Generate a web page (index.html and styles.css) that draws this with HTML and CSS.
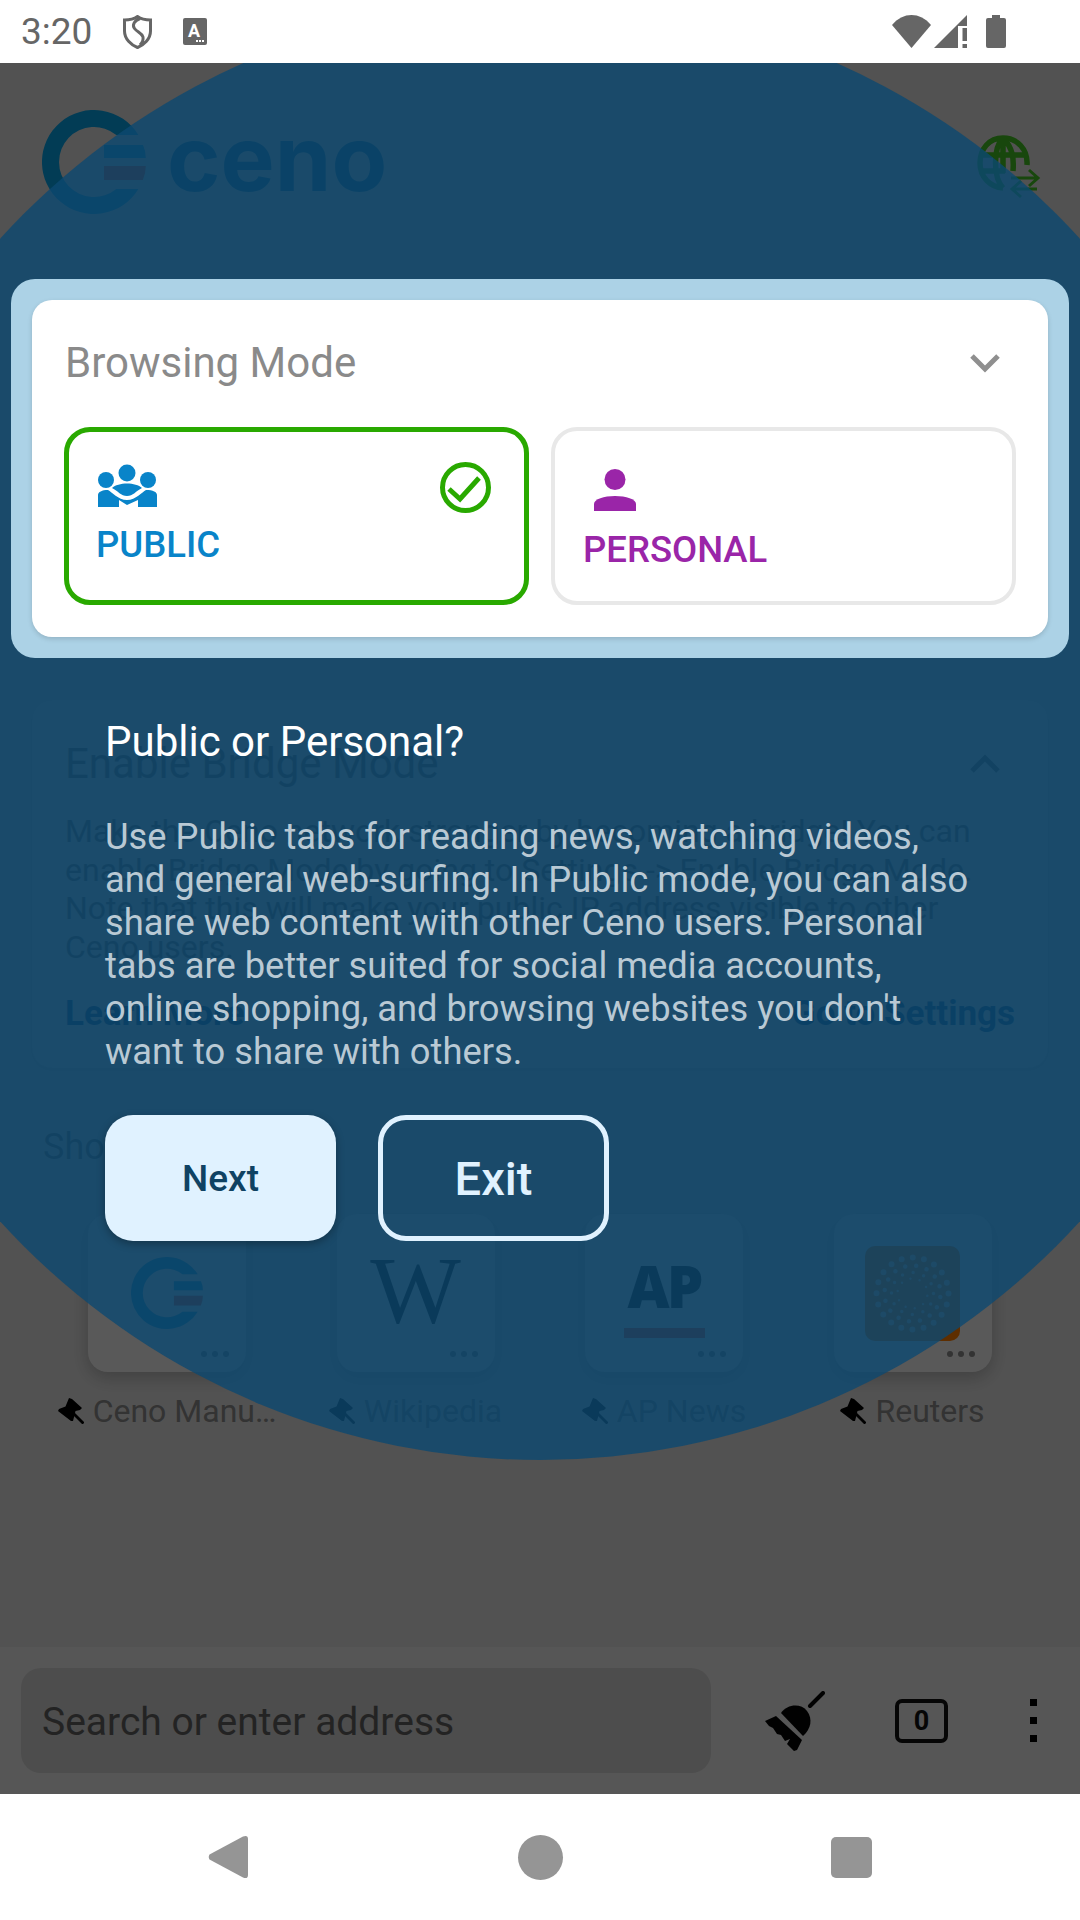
FILE: index.html
```html
<!DOCTYPE html>
<html lang="en">
<head>
    <meta charset="UTF-8">
    <meta name="viewport" content="width=device-width, initial-scale=1.0">
    <title>Ceno Browser</title>
    <link rel="stylesheet" href="styles.css">
</head>
<body>
    <svg class="defs" width="0" height="0">
        <symbol id="ceno-mark" viewBox="0 0 104 104">
            <path fill="#08a2e6" d="M96.4 25A52 52 0 1 0 96.4 79H74.3A35 35 0 1 1 74.3 25Z"/>
            <path fill="#08a2e6" d="M62 35H101Q103.8 41 103.8 48H62Z"/>
            <path fill="#ff4a2a" d="M62 56H103.8Q103.8 63 100.8 70H62Z"/>
        </symbol>
        <symbol id="pin" viewBox="0 0 26 26">
            <path d="M11 0L14 1L24 10L22 12L17.500 13L15 23L13 23L0 13L1 11L7.500 8.500Z"/>
            <path d="M14 14L25.500 25.500" fill="none" stroke="#000" stroke-width="2.800"/>
        </symbol>
    </svg>

    <div class="phone">
        <header class="status-bar">
            <span class="clock">3:20</span>
            <svg class="status-shield" width="29" height="34" viewBox="0 0 29 34" fill="none" stroke="#666" stroke-width="3">
                <path d="M14.500 1.500C18 4 23 5 27.500 5V16C27.500 24 21 30 14.500 32.500C8 30 1.500 24 1.500 16V5C6 5 11 4 14.500 1.500Z"/>
                <path d="M17 3.500C11 6 9 10 11.500 13.500C14 17 19 18 20 22C20.500 25 19 28 17 30"/>
            </svg>
            <svg class="status-note" width="24" height="27" viewBox="0 0 24 27">
                <rect width="24" height="27" rx="2" fill="#666"/>
                <text x="11" y="18.500" class="status-note-a">A</text>
                <rect x="13" y="22" width="2" height="2" fill="#fff"/>
                <rect x="16" y="22" width="2" height="2" fill="#fff"/>
                <rect x="19" y="22" width="2" height="2" fill="#fff"/>
            </svg>
            <div class="status-right">
                <svg width="39" height="33" viewBox="0 0 39 33" fill="#666"><path d="M0 10C11-3.300 28-3.300 39 10L19.500 33Z"/></svg>
                <svg width="33" height="33" viewBox="0 0 33 33" fill="#666"><path d="M33 0V11H24V33H0Z"/><rect x="28.500" y="13" width="4.500" height="13"/><rect x="28.500" y="29" width="4.500" height="4"/></svg>
                <svg class="status-battery" width="20" height="33" viewBox="0 0 20 33" fill="#666"><path d="M6 0H14V3H18Q20 3 20 5V31Q20 33 18 33H2Q0 33 0 31V5Q0 3 2 3H6Z"/></svg>
            </div>
        </header>

        <main class="screen">
            <!-- home page, dimmed by the scrim -->
            <div class="home">
                <div class="home-header">
                    <svg class="logo-mark" width="104" height="104"><use href="#ceno-mark"/></svg>
                    <span class="logo-word">ceno</span>
                    <svg class="globe" width="66" height="70" viewBox="0 0 66 70" fill="none" stroke="#42c024" stroke-width="5.500">
                        <path d="M50 30C51 14 40 3 26 3C12 3 3 14 3 28C3 42 13 52 26 53"/>
                        <path d="M26 3C16 13 16 42 26 53M26 3C36 13 37 24 36 36M4 20H48M4 36H28M26 3V38"/>
                        <path d="M34 43H60M52 35L61 43L52 51M60 54H36M44 46L35 54L44 62" stroke-width="3"/>
                    </svg>
                </div>
                <div class="mode-slot"></div>

                <section class="bridge-card">
                    <div class="bridge-head">
                        <span>Enable Bridge Mode</span>
                        <svg width="32" height="20" viewBox="0 0 32 20" fill="none" stroke="#777" stroke-width="5"><path d="M3 17L16 4L29 17"/></svg>
                    </div>
                    <p class="bridge-text">Make the Ceno network stronger by becoming a bridge! You can<br>enable Bridge Mode by going to Settings -&gt; Enable Bridge Mode.<br>Note that this will make your public IP address visible to other<br>Ceno users.</p>
                    <div class="bridge-actions">
                        <span>Learn More</span>
                        <span>Go to Settings</span>
                    </div>
                </section>

                <h3 class="shortcuts-title">Shortcuts</h3>
                <div class="shortcuts">
                    <div class="shortcut">
                        <div class="tile">
                            <svg width="72" height="72"><use href="#ceno-mark"/></svg>
                            <i class="tile-dots"></i>
                        </div>
                        <div class="tile-label"><svg width="26" height="26"><use href="#pin"/></svg>Ceno Manu…</div>
                    </div>
                    <div class="shortcut">
                        <div class="tile">
                            <span class="tile-w">W</span>
                            <i class="tile-dots"></i>
                        </div>
                        <div class="tile-label"><svg width="26" height="26"><use href="#pin"/></svg>Wikipedia</div>
                    </div>
                    <div class="shortcut">
                        <div class="tile tile-ap">
                            <span class="tile-ap-word">AP</span>
                            <b class="tile-ap-bar"></b>
                            <i class="tile-dots"></i>
                        </div>
                        <div class="tile-label"><svg width="26" height="26"><use href="#pin"/></svg>AP News</div>
                    </div>
                    <div class="shortcut">
                        <div class="tile">
                            <svg class="reuters" width="95" height="95" viewBox="0 0 95 95" fill="none" stroke="#fff" stroke-linecap="round" stroke-opacity="0.7">
                                <circle cx="47.500" cy="47.500" r="36" stroke-width="6" stroke-dasharray="0 11.310"/>
                                <circle cx="47.500" cy="47.500" r="28" stroke-width="4.500" stroke-dasharray="0 11" transform="rotate(7 47.500 47.500)"/>
                                <circle cx="47.500" cy="47.500" r="21" stroke-width="3.500" stroke-dasharray="0 11"/>
                                <circle cx="47.500" cy="47.500" r="15" stroke-width="2.500" stroke-dasharray="0 9.400" transform="rotate(9 47.500 47.500)"/>
                            </svg>
                            <i class="tile-dots"></i>
                        </div>
                        <div class="tile-label"><svg width="26" height="26"><use href="#pin"/></svg>Reuters</div>
                    </div>
                </div>

                <div class="toolbar">
                    <div class="search-box">Search or enter address</div>
                    <svg class="broom" width="60" height="60" viewBox="0 0 60 60">
                        <path d="M58 2L45 15" fill="none" stroke="#050505" stroke-width="4" stroke-linecap="round"/>
                        <path d="M16 22C22 13 36 12 42 20C48 28 46 38 38 45Z" fill="#050505"/>
                        <path d="M0 30L11 25L37 49L32 59L29 60L22 53L25 48L20 50L16 44L12 43L8 37L4 35Z" fill="#050505"/>
                    </svg>
                    <div class="tab-count">0</div>
                    <div class="menu-dots"><i></i><i></i><i></i></div>
                </div>
            </div>

            <div class="scrim"></div>
            <div class="spotlight"></div>

            <!-- onboarding step on top of the spotlight -->
            <div class="tour">
                <div class="mode-halo">
                    <div class="mode-card">
                        <div class="mode-head">
                            <span>Browsing Mode</span>
                            <svg width="32" height="20" viewBox="0 0 32 20" fill="none" stroke="#8f8f8f" stroke-width="5"><path d="M3 3L16 16L29 3"/></svg>
                        </div>
                        <div class="mode-options">
                            <div class="mode-option mode-public">
                                <svg width="59" height="43" viewBox="0 0 59 43" fill="#0984c9">
                                    <circle cx="29" cy="9" r="8.500"/>
                                    <circle cx="8" cy="16" r="8"/>
                                    <circle cx="50" cy="16" r="8"/>
                                    <path d="M14 24C20 18 38 18 44 24C38 27 35 32 29 32C23 32 20 27 14 24Z"/>
                                    <path d="M0 43V31C0 28 4 26 10 26C14 28 20 36 29 36C38 36 44 28 48 26C55 26 59 28 59 31V43H40V36L29 41L21 36V43Z"/>
                                </svg>
                                <span>PUBLIC</span>
                                <svg class="mode-check" width="51" height="51" viewBox="0 0 51 51" fill="none" stroke="#29a900" stroke-width="5">
                                    <circle cx="25.500" cy="25.500" r="23"/>
                                    <path d="M9 27L20 37L39 16"/>
                                </svg>
                            </div>
                            <div class="mode-option mode-personal">
                                <svg width="42" height="42" viewBox="0 0 42 42" fill="#9a25a8">
                                    <ellipse cx="21" cy="10.500" rx="10.500" ry="10.500"/>
                                    <path d="M0 42V35C0 30 10 27 21 27C32 27 42 30 42 35V42Z"/>
                                </svg>
                                <span>PERSONAL</span>
                            </div>
                        </div>
                    </div>
                </div>

                <div class="tour-copy">
                    <h2>Public or Personal?</h2>
                    <p>Use Public tabs for reading news, watching videos,<br>and general web-surfing. In Public mode, you can also<br>share web content with other Ceno users. Personal<br>tabs are better suited for social media accounts,<br>online shopping, and browsing websites you don't<br>want to share with others.</p>
                    <div class="tour-buttons">
                        <button class="btn-next">Next</button>
                        <button class="btn-exit">Exit</button>
                    </div>
                </div>
            </div>
        </main>

        <footer class="nav-bar">
            <svg width="40" height="44" viewBox="0 0 40 44" fill="#959595"><path d="M35 1.500L1.500 19.500Q0 22 1.500 24.500L35 42.500Q40 44.500 40 40V4Q40-.5 35 1.500Z"/></svg>
            <div class="nav-home"></div>
            <div class="nav-recent"></div>
        </footer>
    </div>
</body>
</html>
```

FILE: styles.css
```css
* {
    box-sizing: border-box;
}
body {
    margin: 0;
    font-family: Roboto, "Noto Sans", sans-serif;
    background-color: #fff;
}
.defs {
    position: absolute;
}
.phone {
    width: 1080px;
    height: 1920px;
    display: flex;
    flex-direction: column;
    overflow: hidden;
}

/* status bar */
.status-bar {
    height: 63px;
    flex: none;
    display: flex;
    align-items: center;
    padding: 0 74px 0 21px;
    background-color: #fff;
    position: relative;
    z-index: 5;
}
.clock {
    width: 72px;
    font-size: 37px;
    color: #666;
}
.status-shield {
    margin-left: 30px;
}
.status-note {
    margin-left: 31px;
}
.status-note-a {
    font-size: 18px;
    font-weight: 700;
    fill: #fff;
    text-anchor: middle;
}
.status-right {
    margin-left: auto;
    display: flex;
    gap: 3px;
}
.status-battery {
    margin-left: 16px;
}

/* page behind the overlay */
.screen {
    height: 1731px;
    flex: none;
    position: relative;
    overflow: hidden;
}
.home {
    height: 100%;
    display: flex;
    flex-direction: column;
    background-color: #dfdfdf;
}
.home-header {
    height: 237px;
    flex: none;
    display: flex;
    align-items: flex-start;
    padding: 47px 37px 0 42px;
}
.logo-word {
    margin: 22px 0 0 21px;
    font-family: Inter, sans-serif;
    font-size: 91px;
    font-weight: 700;
    line-height: 52px;
    color: #0a78b0;
}
.globe {
    margin: 25px 0 0 auto;
}
.mode-slot {
    height: 337px;
    flex: none;
}
.bridge-card {
    margin: 63px 32px 0;
    height: 368px;
    flex: none;
    padding: 39px 33px 0;
    border-radius: 20px;
    background-color: #e3e3e3;
    box-shadow: 0 2px 6px rgba(0,0,0,0.12);
}
.bridge-head {
    display: flex;
    justify-content: space-between;
    align-items: center;
    padding-right: 14px;
    font-size: 42px;
    line-height: 50px;
    color: #777;
}
.bridge-text {
    margin: 23px 0 0;
    font-size: 32px;
    line-height: 38.5px;
    color: #777;
}
.bridge-actions {
    margin-top: 26px;
    display: flex;
    justify-content: space-between;
    font-size: 35px;
    font-weight: 700;
    line-height: 44px;
    color: #05589a;
}
.shortcuts-title {
    margin: 57px 0 0 43px;
    font-size: 36px;
    font-weight: 400;
    line-height: 44px;
    color: #777;
}
.shortcuts {
    margin-top: 45px;
    padding-left: 88px;
    display: grid;
    grid-template-columns: repeat(4, 158px);
    column-gap: 90.5px;
}
.shortcut {
    display: flex;
    flex-direction: column;
    align-items: center;
}
.tile {
    width: 158px;
    height: 158px;
    position: relative;
    display: flex;
    align-items: center;
    justify-content: center;
    border-radius: 20px;
    background-color: #f2f2f2;
    box-shadow: 0 6px 18px rgba(0,0,0,0.22);
}
.tile-dots {
    position: absolute;
    right: 17px;
    bottom: 15px;
    width: 6px;
    height: 6px;
    border-radius: 50%;
    background-color: #8a8a8a;
    box-shadow: -11px 0 0 #8a8a8a, -22px 0 0 #8a8a8a;
}
.tile-w {
    margin-top: -4px;
    font-family: "Liberation Serif", serif;
    font-size: 96px;
    line-height: 96px;
    color: #000;
}
.tile-ap {
    flex-direction: column;
    padding-top: 14px;
}
.tile-ap-word {
    font-family: "Open Sans", sans-serif;
    font-size: 58px;
    font-weight: 800;
    line-height: 46px;
    letter-spacing: -3px;
    color: #000;
}
.tile-ap-bar {
    width: 81px;
    height: 10px;
    margin-top: 19px;
    background-color: #ff4a2a;
}
.reuters {
    border-radius: 10px;
    background-color: #ff7d00;
}
.tile-label {
    margin-top: 19px;
    display: flex;
    align-items: center;
    gap: 9px;
    white-space: nowrap;
    font-size: 32px;
    line-height: 40px;
    color: #8a8a8a;
}

/* bottom toolbar */
.toolbar {
    height: 147px;
    flex: none;
    margin-top: auto;
    display: flex;
    align-items: center;
    padding-left: 21px;
    background-color: #e8e8e8;
}
.search-box {
    width: 690px;
    height: 105px;
    display: flex;
    align-items: center;
    padding: 3px 0 0 21px;
    border-radius: 20px;
    background-color: #d0d0d0;
    font-size: 39px;
    color: #616161;
}
.broom {
    margin-left: 54px;
}
.tab-count {
    width: 53px;
    height: 44px;
    margin-left: 70px;
    display: flex;
    align-items: center;
    justify-content: center;
    border: 4px solid #000;
    border-radius: 7px;
    font-size: 27px;
    font-weight: 700;
    color: #000;
    opacity: 0.92;
}
.menu-dots {
    margin-left: 82px;
    display: flex;
    flex-direction: column;
    gap: 11px;
}
.menu-dots i {
    width: 7px;
    height: 7px;
    background-color: #000;
}

/* overlay */
.scrim {
    position: absolute;
    inset: 0;
    background-color: rgba(0,0,0,0.63);
}
.spotlight {
    position: absolute;
    left: -190px;
    top: -63px;
    width: 1460px;
    height: 1460px;
    border-radius: 50%;
    background-color: rgba(13,73,112,0.8);
}
.tour {
    position: absolute;
    inset: 0;
    padding-top: 216px;
}
.mode-halo {
    margin: 0 11px;
    padding: 21px;
    border-radius: 24px;
    background-color: #acd2e6;
}
.mode-card {
    height: 337px;
    padding: 0 32px;
    border-radius: 20px;
    background-color: #fff;
    box-shadow: 0 2px 5px rgba(0,0,0,0.15);
}
.mode-head {
    height: 127px;
    display: flex;
    justify-content: space-between;
    align-items: center;
    padding: 0 15px 2px 1px;
    font-size: 42px;
    color: #8a8a8a;
}
.mode-options {
    display: flex;
    gap: 22px;
}
.mode-option {
    height: 178px;
    position: relative;
    display: flex;
    flex-direction: column;
    border-radius: 26px;
    font-size: 36.5px;
    font-weight: 500;
}
.mode-option > svg {
    flex: none;
}
.mode-public {
    width: 465px;
    padding: 32px 0 0 27px;
    border: 5px solid #29a900;
    color: #0984c9;
}
.mode-public > svg:first-child {
    margin-left: 2px;
}
.mode-public span {
    margin-top: 16px;
}
.mode-public .mode-check {
    position: absolute;
    top: 30px;
    right: 33px;
}
.mode-personal {
    width: 465px;
    padding: 38px 0 0 28px;
    border: 4px solid #e8e8e8;
    color: #9a25a8;
}
.mode-personal > svg {
    margin-left: 11px;
}
.mode-personal span {
    margin-top: 17px;
}
.tour-copy {
    padding: 60px 0 0 105px;
}
.tour-copy h2 {
    margin: 0;
    font-size: 42px;
    font-weight: 400;
    line-height: 48px;
    color: #fff;
}
.tour-copy p {
    margin: 49px 0 0;
    font-size: 36.3px;
    line-height: 43px;
    color: #b9c9d4;
}
.tour-buttons {
    margin-top: 42px;
    display: flex;
    gap: 42px;
}
.tour-buttons button {
    width: 231px;
    height: 126px;
    border-radius: 28px;
    font-family: inherit;
    font-weight: 500;
}
.btn-next {
    border: none;
    background-color: #e0f2ff;
    box-shadow: 0 3px 9px rgba(0,0,0,0.3);
    font-size: 37px;
    color: #0f4263;
}
.btn-exit {
    border: 5px solid #e0f2ff;
    background-color: transparent;
    font-size: 47px;
    color: #e0f2ff;
}

/* system navigation */
.nav-bar {
    height: 126px;
    flex: none;
    display: flex;
    align-items: center;
    padding-left: 208px;
    gap: 270px;
    background-color: #fff;
}
.nav-home {
    width: 45px;
    height: 45px;
    border-radius: 50%;
    background-color: #959595;
}
.nav-recent {
    width: 41px;
    height: 41px;
    margin-left: -2px;
    border-radius: 5px;
    background-color: #959595;
}
```
